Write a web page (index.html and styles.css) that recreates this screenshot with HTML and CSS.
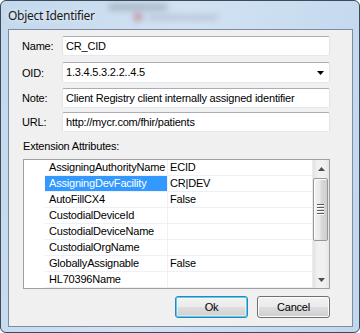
FILE: index.html
```html
<!DOCTYPE html>
<html>
<head>
<meta charset="utf-8">
<link rel="stylesheet" href="styles.css">
</head>
<body>
<div class="window">
  <div class="titlebar">
    <div class="glass g1"></div>
    <div class="glass g2"></div>
    <div class="glass g3"></div>
    <span class="title">Object Identifier</span>
  </div>
  <div class="client">
    <div class="field f-name"><span class="lbl">Name:</span><div class="textbox">CR_CID</div></div>
    <div class="field f-oid"><span class="lbl">OID:</span>
      <div class="combo"><span>1.3.4.5.3.2.2..4.5</span>
        <svg class="drop" width="7" height="4" viewBox="0 0 7 4"><path d="M0 0h7L3.5 4z" fill="#000"/></svg>
      </div>
    </div>
    <div class="field f-note"><span class="lbl">Note:</span><div class="textbox">Client Registry client internally assigned identifier</div></div>
    <div class="field f-url"><span class="lbl">URL:</span><div class="textbox">http://mycr.com/fhir/patients</div></div>
    <div class="ext-label">Extension Attributes:</div>
    <div class="grid">
      <div class="rows">
        <div class="row"><div class="hdr"></div><div class="name">AssigningAuthorityName</div><div class="val">ECID</div></div>
        <div class="row sel"><div class="hdr"></div><div class="name">AssigningDevFacility</div><div class="val">CR|DEV</div></div>
        <div class="row"><div class="hdr"></div><div class="name">AutoFillCX4</div><div class="val">False</div></div>
        <div class="row"><div class="hdr"></div><div class="name">CustodialDeviceId</div><div class="val"></div></div>
        <div class="row"><div class="hdr"></div><div class="name">CustodialDeviceName</div><div class="val"></div></div>
        <div class="row"><div class="hdr"></div><div class="name">CustodialOrgName</div><div class="val"></div></div>
        <div class="row"><div class="hdr"></div><div class="name">GloballyAssignable</div><div class="val">False</div></div>
        <div class="row"><div class="hdr"></div><div class="name">HL70396Name</div><div class="val"></div></div>
      </div>
      <div class="scrollbar">
        <div class="sb-btn"><svg width="7" height="4" viewBox="0 0 7 4"><path d="M3.5 0L7 4H0z" fill="#4d4d4d"/></svg></div>
        <div class="sb-track">
          <div class="thumb">
            <div class="grip"><i></i><i></i><i></i><i></i></div>
          </div>
        </div>
        <div class="sb-btn"><svg width="7" height="4" viewBox="0 0 7 4"><path d="M0 0h7L3.5 4z" fill="#4d4d4d"/></svg></div>
      </div>
    </div>
    <div class="buttons">
      <div class="btn default">Ok</div>
      <div class="btn">Cancel</div>
    </div>
  </div>
</div>
</body>
</html>
```

FILE: styles.css
```css
html, body {
  margin: 0;
  padding: 0;
  background: #ffffff;
}
.window {
  position: relative;
  width: 360px;
  height: 333px;
  box-sizing: border-box;
  border: 1px solid #3c4a5a;
  border-radius: 6px;
  padding: 0 6px 5px 7px;
  background: linear-gradient(100deg, #c3d8ed 0%, #d2e2f3 45%, #c0d7ee 100%);
  overflow: hidden;
  font-family: "Liberation Sans", Arial, sans-serif;
  font-size: 11px;
  letter-spacing: -0.2px;
  color: #000;
}
.titlebar {
  position: relative;
  height: 28px;
}
.title {
  position: absolute;
  left: 0;
  top: 6px;
  font-family: "Noto Sans", "Open Sans", sans-serif;
  font-size: 12px;
  letter-spacing: -0.3px;
  color: #1a1a1a;
  text-shadow: 0 0 6px rgba(255,255,255,0.9);
}
.glass {
  position: absolute;
  filter: blur(3px);
  border-radius: 3px;
}
.g1 { left: 100px; top: 3px; width: 60px; height: 6px; background: rgba(70,80,90,0.3); }
.g2 { left: 126px; top: 12px; width: 8px; height: 8px; background: rgba(180,40,40,0.45); }
.g3 { left: 140px; top: 14px; width: 70px; height: 5px; background: rgba(80,90,100,0.22); }
.client {
  box-sizing: border-box;
  width: 345px;
  height: 298px;
  border: 1px solid #7f8c9c;
  background: #f0f0f0;
  padding: 6px 22px 0 13px;
  display: flex;
  flex-direction: column;
}
.field {
  display: flex;
  align-items: center;
}
.lbl {
  width: 40px;
  flex: none;
}
.textbox, .combo {
  box-sizing: border-box;
  width: 268px;
  height: 20px;
  background: #fff;
  border: 1px solid #e2e3ea;
  border-top-color: #abadb3;
  border-bottom-color: #e3e9ef;
  border-radius: 2px;
  padding: 0 0 0 3px;
  line-height: 18px;
  white-space: nowrap;
  overflow: hidden;
}
.combo {
  height: 21px;
  line-height: 19px;
  display: flex;
  justify-content: space-between;
  align-items: center;
  padding-right: 5px;
}
.f-name { margin-bottom: 6px; }
.f-oid { margin-bottom: 5px; }
.f-note { margin-bottom: 4px; }
.ext-label {
  margin: 8px 0 0 1px;
  height: 13px;
  line-height: 13px;
}
.grid {
  margin: 6px 0 0 1px;
  box-sizing: border-box;
  width: 307px;
  height: 130px;
  border: 1px solid #a0a0a0;
  background: #fff;
  display: flex;
}
.rows {
  flex: 1;
  display: flex;
  flex-direction: column;
}
.row {
  display: flex;
  height: 16px;
  line-height: 15px;
}
.hdr {
  width: 21px;
  flex: none;
}
.name {
  box-sizing: border-box;
  width: 123px;
  flex: none;
  padding-left: 4px;
  border-bottom: 1px solid #edf1f7;
  border-right: 1px solid #edf1f7;
  white-space: nowrap;
  overflow: hidden;
}
.val {
  box-sizing: border-box;
  flex: 1;
  padding-left: 2px;
  border-bottom: 1px solid #edf1f7;
}
.row.sel .name {
  background: #3399ff;
  color: #fff;
}
.scrollbar {
  width: 17px;
  flex: none;
  display: flex;
  flex-direction: column;
  background: linear-gradient(90deg, #e3e3e3, #f1f1f1 30%, #f1f1f1 70%, #e6e6e6);
  border-left: 1px solid #ececec;
  box-sizing: border-box;
}
.sb-btn {
  height: 17px;
  display: flex;
  align-items: center;
  justify-content: center;
  flex: none;
}
.sb-track {
  flex: 1;
  padding-top: 1px;
}
.thumb {
  box-sizing: border-box;
  margin: 0 1px 0 0;
  height: 63px;
  border: 1px solid #979797;
  border-radius: 2px;
  background: linear-gradient(90deg, #f3f3f3 0%, #e9e9e9 45%, #d9d9d9 55%, #cfcfcf 100%);
  box-shadow: inset 1px 1px 0 #fff;
  display: flex;
  align-items: center;
  justify-content: center;
}
.grip {
  display: flex;
  flex-direction: column;
  gap: 1px;
}
.grip i {
  display: block;
  width: 7px;
  height: 1px;
  background: #5a5a5a;
  border-bottom: 1px solid #fff;
}
.buttons {
  margin-top: 7px;
  display: flex;
  justify-content: flex-end;
  gap: 9px;
}
.btn {
  box-sizing: border-box;
  width: 73px;
  height: 22px;
  border: 1px solid #707070;
  border-radius: 3px;
  background: linear-gradient(180deg, #f2f2f2 0%, #ebebeb 48%, #dddddd 52%, #cfcfcf 100%);
  box-shadow: inset 0 0 0 1px #fcfcfc;
  text-align: center;
  line-height: 20px;
}
.btn.default {
  border-color: #3c7fb1;
  box-shadow: inset 0 0 0 1px #48d1fb, inset 0 0 0 2px rgba(255,255,255,0.4);
}
```
